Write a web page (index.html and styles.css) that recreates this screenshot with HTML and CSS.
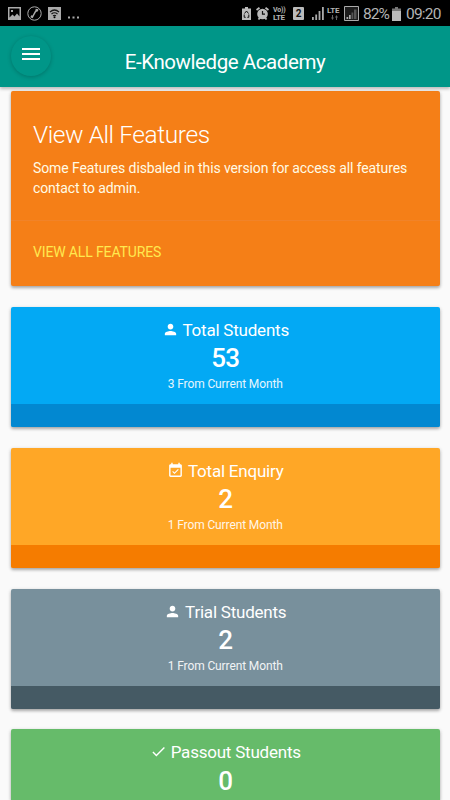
FILE: index.html
```html
<!DOCTYPE html>
<html lang="en">
<head>
<meta charset="utf-8">
<meta name="viewport" content="width=device-width, initial-scale=1">
<title>E-Knowledge Academy</title>
<link rel="stylesheet" href="styles.css">
</head>
<body>
<div class="status">
  <div class="status-left">
    <svg width="13" height="13" viewBox="0 0 13 13"><path fill="#aaa" fill-rule="evenodd" d="M0 0h13v13H0zM1.500 1.500v9l3-3 2 2 2.500-3 2.500 3v-8zM3 3h2v2H3z"/></svg>
    <svg width="15" height="15" viewBox="0 0 15 15" fill="none" stroke="#aaa"><circle cx="7.500" cy="7.500" r="6.700"/><path stroke-width="1.500" d="M4.500 11C8 10 6.500 5.500 10 4.500"/><path stroke-width="2.200" d="M3.800 10.300l2.400 1M8.500 3.800l2.700.6"/></svg>
    <svg width="13" height="13" viewBox="0 0 13 13"><path fill="#aaa" d="M0 0h13v13H0z"/><path fill="none" stroke="#161616" stroke-width="1.200" d="M2 5q4.500-4 9 0M3.500 7q3-2.500 6 0M5 8.800q1.500-1 3 0"/><circle cx="6.500" cy="10.300" r="1"/></svg>
    <svg class="dots" width="12" height="3" viewBox="0 0 12 3" fill="#aaa"><path d="M0 .5h2v2H0zM4.500.5h2v2h-2zM9 .5h2v2H9z"/></svg>
  </div>
  <div class="status-right">
    <svg class="saver" width="9" height="13" viewBox="0 0 9 13"><path fill="#bbb" d="M3 0h3v1.500h3V13H0V1.500h3z"/><path fill="none" stroke="#111" d="M2.500 6.500l2-2.500 2 2.500M2.200 7.500v2.800h1.500M6.800 7.500v2.800H5.300"/></svg>
    <svg class="alarm" width="13" height="13" viewBox="0 0 13 13"><path stroke="#bbb" stroke-width="1.800" d="M.5 3L3.500.8M12.500 3l-3-2.200M2.500 12.500l1.500-2M10.500 12.500l-1.500-2"/><circle cx="6.500" cy="7" r="5.300" fill="#bbb"/><path fill="none" stroke="#111" stroke-width="1.200" d="M6.500 4v3.200H9"/></svg>
    <span class="volte"><span>Vo))</span><span class="volte-lte">LTE</span></span>
    <span class="sim">2</span>
    <svg class="signal" width="12" height="13" viewBox="0 0 12 13" fill="#aaa"><path d="M0 10h1.800v3H0zM3.300 7.500h1.800V13H3.300zM6.600 4h1.800v9H6.600zM10 0h1.800v13H10z"/></svg>
    <span class="lte"><span>LTE</span><svg class="arrows" width="7" height="5" viewBox="0 0 7 5" fill="#666"><path d="M1 0h1v2.500h1L1.500 5 0 2.500h1zM5 5h1V2.500h1L5.500 0 4 2.500h1z"/></svg></span>
    <svg class="signal-box" width="15" height="15" viewBox="0 0 15 15"><path fill="#1c1c1c" stroke="#aaa" d="M.5.5h14v14H.5z"/><path fill="#aaa" d="M2.500 11h1.700v2H2.500zM5 9h1.700v4H5z"/><path fill="#555" d="M7.500 6.500h1.800V13H7.500zM10 3.500h2.500V13H10z"/></svg>
    <span class="percent">82%</span>
    <svg class="battery" width="9" height="14" viewBox="0 0 9 14"><path fill="#777" d="M3 0h3v1.500h3V14H0V1.500h3z"/><path fill="#bbb" d="M0 4h9v10H0z"/></svg>
    <span class="clock">09:20</span>
  </div>
</div>
<header class="navbar">
  <button class="menu" aria-label="Menu"><svg width="18" height="12" viewBox="0 0 18 12" fill="#fff"><path d="M0 0h18v2H0zM0 5h18v2H0zM0 10h18v2H0z"/></svg></button>
  <h1>E-Knowledge Academy</h1>
</header>
<main>
  <section class="card features">
    <div class="features-body">
      <h2>View All Features</h2>
      <p>Some Features disbaled in this version for access all features contact to admin.</p>
    </div>
    <div class="features-action"><a>VIEW ALL FEATURES</a></div>
  </section>
  <section class="card stat blue">
    <div class="stat-body">
      <h3><svg class="icon" viewBox="0 0 24 24"><path d="M12 12c2.210 0 4-1.790 4-4s-1.790-4-4-4-4 1.790-4 4 1.790 4 4 4zm0 2c-2.670 0-8 1.340-8 4v2h16v-2c0-2.660-5.330-4-8-4z"/></svg><span>Total Students</span></h3>
      <strong>53</strong><small>3 From Current Month</small>
    </div>
    <div class="stat-foot"></div>
  </section>
  <section class="card stat orange">
    <div class="stat-body">
      <h3><svg class="icon" viewBox="0 0 24 24"><path d="M16.530 11.060L15.470 10l-4.880 4.880-2.120-2.120-1.060 1.060L10.590 17l5.940-5.940zM19 3h-1V1h-2v2H8V1H6v2H5c-1.110 0-1.990.9-1.990 2L3 19c0 1.100.89 2 2 2h14c1.100 0 2-.9 2-2V5c0-1.100-.9-2-2-2zm0 16H5V8h14v11z"/></svg><span>Total Enquiry</span></h3>
      <strong>2</strong><small>1 From Current Month</small>
    </div>
    <div class="stat-foot"></div>
  </section>
  <section class="card stat grey">
    <div class="stat-body">
      <h3><svg class="icon" viewBox="0 0 24 24"><path d="M12 12c2.210 0 4-1.790 4-4s-1.790-4-4-4-4 1.790-4 4 1.790 4 4 4zm0 2c-2.670 0-8 1.340-8 4v2h16v-2c0-2.660-5.330-4-8-4z"/></svg><span>Trial Students</span></h3>
      <strong>2</strong><small>1 From Current Month</small>
    </div>
    <div class="stat-foot"></div>
  </section>
  <section class="card stat green">
    <div class="stat-body">
      <h3><svg class="icon" viewBox="0 0 24 24"><path d="M9 16.170L4.830 12l-1.420 1.410L9 19 21 7l-1.410-1.410z"/></svg><span>Passout Students</span></h3>
      <strong>0</strong>
    </div>
  </section>
</main>
</body>
</html>
```
FILE: styles.css
```css
* { box-sizing: border-box; }
body {
  margin: 0;
  height: 800px;
  overflow: hidden;
  background: #fafafa;
  font-family: Roboto, sans-serif;
  color: #fff;
}
h1, h2, h3, p { margin: 0; font-weight: 400; }
svg { display: block; flex: none; }

.status {
  display: flex;
  justify-content: space-between;
  height: 26px;
  padding: 0 9px 0 8px;
  background: #000;
  color: #b4b4b4;
}
.status-left, .status-right { display: flex; align-items: center; }
.status-left { gap: 6px; }
.dots { margin: 9px 0 0 1px; }
.status-right { padding-top: 1px; }
.alarm { margin-left: 5px; }
.volte, .lte { display: flex; flex-direction: column; font-weight: 700; }
.volte { width: 13px; margin-left: 4px; font-size: 7px; line-height: 7px; letter-spacing: -0.2px; }
.volte-lte { font-size: 8px; letter-spacing: -0.4px; }
.sim {
  width: 11px;
  height: 13px;
  margin-left: 7px;
  border-radius: 1px;
  background: #bbb;
  color: #111;
  font-size: 10px;
  font-weight: 700;
  line-height: 13px;
  text-align: center;
}
.signal { margin-left: 8px; }
.lte { width: 14px; margin-left: 3px; font-size: 8px; line-height: 8px; letter-spacing: -0.2px; }
.arrows { margin-left: 4px; }
.signal-box { margin-left: 3px; }
.percent, .clock { font-size: 15.500px; line-height: 18px; white-space: nowrap; }
.percent { width: 25px; margin-left: 4px; letter-spacing: -1px; }
.battery { margin-left: 4px; }
.clock { width: 35px; margin-left: 5px; letter-spacing: -0.8px; }

.navbar {
  position: relative;
  display: flex;
  height: 61px;
  background: #009688;
  box-shadow: 0 2px 3px rgba(0, 0, 0, .25);
}
.menu {
  display: flex;
  align-items: center;
  justify-content: center;
  width: 40px;
  height: 40px;
  margin: 10px 0 0 11px;
  padding: 0 0 5px;
  border: 0;
  border-radius: 50%;
  background: #009688;
  box-shadow: 0 1px 4px rgba(0, 0, 0, .22);
}
.navbar h1 {
  flex: 1;
  margin-right: 51px;
  padding-top: 7px;
  font-size: 20.5px;
  letter-spacing: -0.43px;
  line-height: 58px;
  text-align: center;
}

main {
  display: flex;
  flex-direction: column;
  gap: 21px;
  padding: 4px 10.5px 0 11px;
}
.card {
  flex: none;
  border-radius: 2px;
  box-shadow: 0 2px 3px rgba(0, 0, 0, .25), 0 1px 4px rgba(0, 0, 0, .14);
  overflow: hidden;
}
.features { height: 194.5px; margin-bottom: .5px; background: #f57f17; }
.features-body { height: 129px; padding: 28px 22px 0; }
.features h2 { font-size: 24.5px; font-weight: 300; letter-spacing: -0.42px; line-height: 32px; }
.features p { margin-top: 7px; font-size: 14px; letter-spacing: -0.11px; line-height: 20px; color: #fffbe5; }
.features-action {
  height: 66px;
  padding: 21px 22px;
  border-top: 1px solid #f18328;
  color: #ffe94f;
  font-size: 14px;
  letter-spacing: -0.14px;
  line-height: 20px;
}

.stat { height: 120px; }
.stat-body {
  display: flex;
  flex-direction: column;
  align-items: center;
  height: 97px;
}
.stat h3 {
  display: flex;
  gap: 4px;
  margin-top: 12px;
  font-size: 17px;
  letter-spacing: -0.22px;
  line-height: 22px;
}
.icon { width: 17px; height: 17px; margin-top: 2px; fill: #fff; }
.stat strong { font-size: 26px; font-weight: 500; letter-spacing: -0.8px; line-height: 34px; }
.stat small { font-size: 12px; letter-spacing: -0.11px; line-height: 18px; opacity: .9; }
.stat-foot { height: 23px; }
.blue { background: #03a9f4; }
.blue .stat-foot { background: #0288d1; }
.orange { background: #ffa726; }
.orange .stat-foot { background: #f57c00; }
.grey { margin-bottom: -1px; background: #78909c; }
.grey .stat-foot { background: #455a64; }
.green { height: 71px; border-radius: 2px 2px 0 0; background: #66bb6a; }
.green .stat-body { height: 71px; }
.green strong { line-height: 36px; }
```
